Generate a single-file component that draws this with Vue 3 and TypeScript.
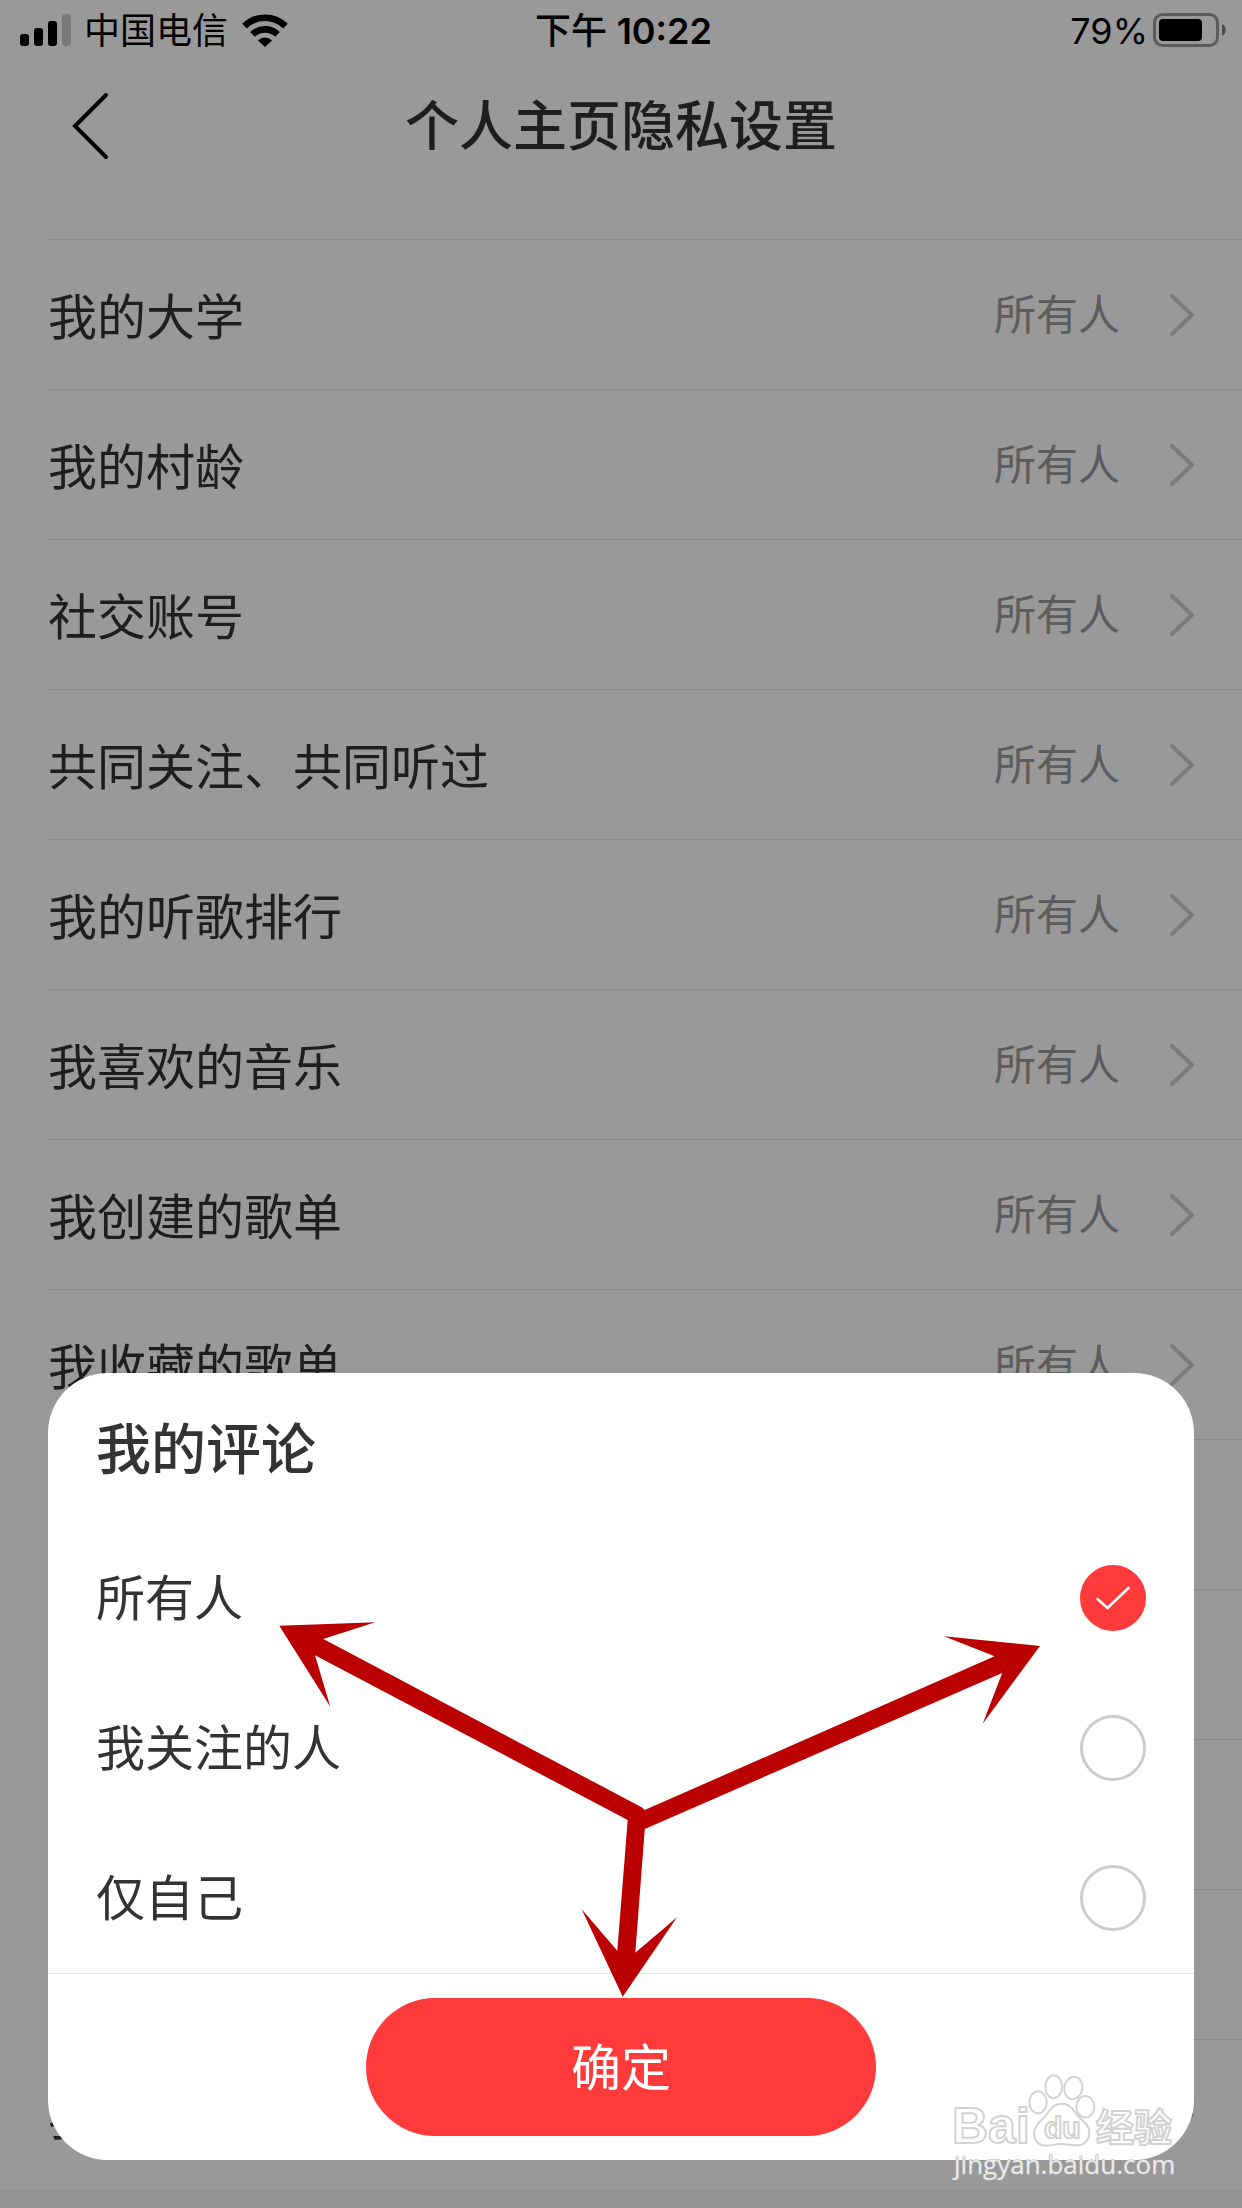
<script setup lang="ts">
import { ref } from 'vue'

interface Setting {
  label: string
  value: string
}

const everyone = '所有人'

const settings: Setting[] = [
  { label: '我的大学', value: everyone },
  { label: '我的村龄', value: everyone },
  { label: '社交账号', value: everyone },
  { label: '共同关注、共同听过', value: everyone },
  { label: '我的听歌排行', value: everyone },
  { label: '我喜欢的音乐', value: everyone },
  { label: '我创建的歌单', value: everyone },
  { label: '我收藏的歌单', value: everyone },
  { label: '', value: '' },
  { label: '', value: '' },
  { label: '', value: '' },
  { label: '', value: '' },
  { label: '我的评论', value: '' },
]

const options: string[] = [everyone, '我关注的人', '仅自己']
const selected = ref<string>(everyone)
</script>

<template>
  <div class="screen">
    <header class="status">
      <div class="status-side">
        <svg class="signal" viewBox="0 0 52 32" aria-hidden="true">
          <rect x="0" y="20" width="9" height="12" rx="3" />
          <rect x="14" y="14" width="9" height="18" rx="3" />
          <rect x="28" y="7" width="9" height="25" rx="3" />
          <rect x="42" y="0" width="9" height="32" rx="3" opacity="0.2" />
        </svg>
        <span class="carrier">中国电信</span>
        <svg class="wifi" viewBox="0 0 46 33" aria-hidden="true">
          <path d="M2.5 12.2a29 29 0 0 1 41 0" fill="none" stroke="#000" stroke-width="6.6" />
          <path d="M10.5 20.4a18 18 0 0 1 25 0" fill="none" stroke="#000" stroke-width="6.6" />
          <path d="M16 26.4a10 10 0 0 1 14 0L23 33z" />
        </svg>
      </div>
      <span class="clock">下午 <b>10:22</b></span>
      <div class="status-side end">
        <span class="percent">79%</span>
        <svg class="battery" viewBox="0 0 74 34" aria-hidden="true">
          <rect x="1.5" y="1.5" width="63" height="31" rx="8" fill="none" stroke="#000" stroke-opacity="0.4" stroke-width="3" />
          <rect x="6" y="6" width="43" height="22" rx="4" />
          <path d="M69 11c5 2 5 10 0 12z" opacity="0.5" />
        </svg>
      </div>
    </header>

    <nav class="bar">
      <button class="back" type="button" aria-label="返回">
        <svg viewBox="0 0 38 68" aria-hidden="true">
          <path d="M35 3 4 34l31 31" fill="none" stroke="#000" stroke-width="4" stroke-linecap="round" />
        </svg>
      </button>
      <h1>个人主页隐私设置</h1>
    </nav>

    <ul class="settings">
      <li v-for="(item, i) in settings" :key="i">
        <button class="row" type="button">
          <span class="label">{{ item.label }}</span>
          <span class="value">{{ item.value }}</span>
          <svg class="chevron" viewBox="0 0 24 42" aria-hidden="true">
            <path d="M2 2l20 19L2 40" fill="none" stroke="#ccc" stroke-width="4" stroke-linecap="round" stroke-linejoin="round" />
          </svg>
        </button>
      </li>
    </ul>

    <div class="scrim">
      <form class="sheet" @submit.prevent>
        <h2>我的评论</h2>
        <label v-for="option in options" :key="option" class="option">
          <span class="option-text">{{ option }}</span>
          <span class="radio">
            <input v-model="selected" type="radio" name="visibility" :value="option" />
            <svg v-if="selected === option" viewBox="0 0 66 66" aria-hidden="true">
              <path d="M17.5 34 27.5 43 48.5 23" fill="none" stroke="#fff" stroke-width="2.6" stroke-linecap="round" />
            </svg>
          </span>
        </label>
        <div class="actions">
          <button class="confirm" type="submit">确定</button>
        </div>
        <svg class="arrows" viewBox="0 0 1146 787" aria-hidden="true">
          <path
            d="M231.3 252.7 327.3 249.3 275.3 266 593.7 434.3 596.7 437 946.6 283.3 896 263.3 992 273 934.7 350.7 954.2 300 596.8 456 587.3 579.7 629 544.3 574.7 623.7 533.7 536.3 569.3 577.7 579.7 447 267 282.3 282.3 333.7z"
            fill="#ba0000"
          />
        </svg>
      </form>

      <svg class="watermark" viewBox="0 0 226 116" aria-hidden="true">
        <g fill="#fff" stroke="#d2d2d2" stroke-width="2">
          <text class="brand" x="2" y="73" font-size="50">Bai</text>
          <ellipse cx="88" cy="32.3" rx="8.7" ry="11" />
          <ellipse cx="103.7" cy="16.7" rx="8.4" ry="11.5" />
          <ellipse cx="123.3" cy="18" rx="9" ry="11.2" transform="rotate(12 123.3 18)" />
          <ellipse cx="135.3" cy="36.7" rx="9" ry="10.8" />
          <path d="M111.7 33.7c8 0 11 5 15 11 4 5 12.6 9 12.6 18 0 8-6 13-12.6 12.6C121 75 117 74 111.7 74s-10 1.600-15 1.700C89 75.800 84 71 84 63.300c0-8 7-12 12-18 4-6 7.700-11.600 15.700-11.600z" />
          <text class="brand" x="94" y="68" font-size="30">du</text>
          <text class="brand-cjk" x="146" y="71" font-size="38">经验</text>
        </g>
        <text class="url" x="4" y="104" font-size="26">jingyan.baidu.com</text>
      </svg>
    </div>
  </div>
</template>

<style>
body {
  margin: 0;
}
</style>

<style scoped>
.screen {
  position: relative;
  display: flex;
  flex-direction: column;
  min-height: 100vh;
  background: #f5f5f5;
  color: #333;
  font-family: Inter, "Noto Sans CJK SC", sans-serif;
}

button {
  border: 0;
  padding: 0;
  background: none;
  color: inherit;
  font: inherit;
}

h1,
h2,
ul {
  margin: 0;
  padding: 0;
}

svg {
  display: block;
}

.status {
  display: grid;
  grid-template-columns: 1fr auto 1fr;
  align-items: center;
  height: 60px;
  padding: 0 15px 0 20px;
  background: #fff;
  color: #000;
  font-size: 36px;
  line-height: 48px;
}

.status-side {
  display: flex;
  align-items: center;
}

.end {
  justify-content: flex-end;
}

.signal {
  width: 52px;
  height: 32px;
}

.carrier,
.clock,
.percent {
  padding-top: 2px;
}

.carrier {
  margin: 0 14px 0 12px;
}

.wifi {
  width: 46px;
  height: 33px;
}

.clock {
  font-weight: 500;
}

.clock b {
  font-weight: 600;
}

.battery {
  width: 74px;
  height: 34px;
  margin-left: 5px;
}

.bar {
  display: grid;
  grid-template-columns: 48px 1fr 48px;
  align-items: center;
  height: 132px;
  padding: 0 71px 47px;
  background: #fff;
  border-bottom: 1px solid #e5e5e5;
  border-image: linear-gradient(to right, #fff 48px, #e5e5e5 48px) 1;
}

.back svg {
  width: 38px;
  height: 68px;
}

h1,
h2 {
  font-weight: 500;
  line-height: 80px;
}

h1 {
  padding-top: 2px;
  font-size: 54px;
  text-align: center;
}

h2 {
  padding: 36px 48px 34px;
  font-size: 55px;
}

.settings {
  list-style: none;
  padding-left: 48px;
  background: #fff;
}

.row {
  display: flex;
  align-items: center;
  width: 100%;
  height: 150px;
  padding-right: 48px;
  border-bottom: 1px solid #e5e5e5;
}

li:last-child .row {
  border-bottom-color: #fff;
}

.label {
  flex: 1;
  padding-bottom: 2px;
  text-align: left;
  font-size: 49px;
}

.value {
  padding-bottom: 6px;
  color: #999;
  font-size: 42px;
}

.chevron {
  width: 24px;
  height: 42px;
  margin-left: 50px;
}

.scrim {
  position: absolute;
  inset: 0;
  display: flex;
  align-items: flex-end;
  padding: 48px;
  background: rgba(0, 0, 0, 0.4);
}

.sheet {
  position: relative;
  flex: 1;
  border-radius: 60px;
  background: #fff;
}

.option {
  display: flex;
  align-items: center;
  justify-content: space-between;
  height: 150px;
  padding: 0 48px;
  font-size: 49px;
}

.option-text {
  padding-bottom: 8px;
}

.radio {
  display: grid;
}

.radio > * {
  grid-area: 1 / 1;
  width: 66px;
  height: 66px;
}

.radio svg {
  pointer-events: none;
}

input {
  appearance: none;
  margin: 0;
  border: 3px solid #ccc;
  border-radius: 50%;
}

input:checked {
  border-color: #ff3a3a;
  background: #ff3a3a;
}

.actions {
  display: flex;
  justify-content: center;
  padding: 24px;
  border-top: 1px solid #e5e5e5;
}

.confirm {
  width: 510px;
  height: 138px;
  padding-bottom: 6px;
  border-radius: 69px;
  background: #ff3a3a;
  color: #fff;
  font-size: 50px;
}

.arrows {
  position: absolute;
  inset: 0;
  width: 100%;
  height: 100%;
  pointer-events: none;
}

.watermark {
  position: absolute;
  right: 66px;
  bottom: 22px;
  width: 226px;
  height: 116px;
}

.brand {
  font-family: "Liberation Sans", sans-serif;
  font-weight: 700;
}

.brand-cjk {
  font-family: "Noto Sans CJK SC", sans-serif;
  font-weight: 700;
}

.url {
  fill: #ebebeb;
  stroke: #b0b0b0;
  stroke-width: 1px;
  paint-order: stroke;
  font-family: "Open Sans", sans-serif;
}
</style>
